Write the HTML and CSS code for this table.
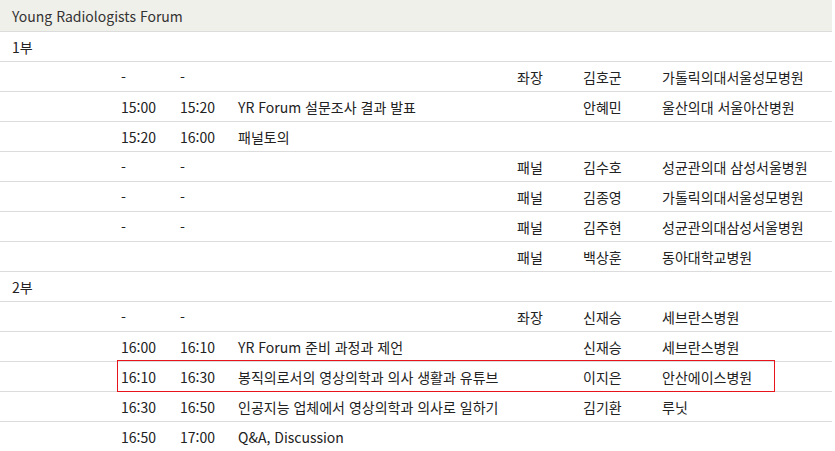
FILE: index.html
```html
<!DOCTYPE html>
<html lang="ko">
<head>
    <meta charset="UTF-8">
    <meta name="viewport" content="width=device-width, initial-scale=1.0">
    <title>Young Radiologists Forum</title>
    <link rel="stylesheet" href="styles.css">
</head>
<body>
    <div class="program">
        <table class="schedule">
            <colgroup>
                <col class="c-blank">
                <col class="c-start">
                <col class="c-end">
                <col class="c-title">
                <col class="c-role">
                <col class="c-name">
                <col class="c-org">
            </colgroup>
            <thead>
                <tr><th colspan="7">Young Radiologists Forum</th></tr>
            </thead>
            <tbody>
                <tr class="part"><td colspan="7">1부</td></tr>
                <tr><td></td><td>-</td><td>-</td><td></td><td>좌장</td><td>김호군</td><td>가톨릭의대서울성모병원</td></tr>
                <tr><td></td><td>15:00</td><td>15:20</td><td>YR Forum 설문조사 결과 발표</td><td></td><td>안혜민</td><td>울산의대 서울아산병원</td></tr>
                <tr><td></td><td>15:20</td><td>16:00</td><td>패널토의</td><td></td><td></td><td></td></tr>
                <tr><td></td><td>-</td><td>-</td><td></td><td>패널</td><td>김수호</td><td>성균관의대 삼성서울병원</td></tr>
                <tr><td></td><td>-</td><td>-</td><td></td><td>패널</td><td>김종영</td><td>가톨릭의대서울성모병원</td></tr>
                <tr><td></td><td>-</td><td>-</td><td></td><td>패널</td><td>김주현</td><td>성균관의대삼성서울병원</td></tr>
                <tr><td></td><td></td><td></td><td></td><td>패널</td><td>백상훈</td><td>동아대학교병원</td></tr>
                <tr class="part"><td colspan="7">2부</td></tr>
                <tr><td></td><td>-</td><td>-</td><td></td><td>좌장</td><td>신재승</td><td>세브란스병원</td></tr>
                <tr><td></td><td>16:00</td><td>16:10</td><td>YR Forum 준비 과정과 제언</td><td></td><td>신재승</td><td>세브란스병원</td></tr>
                <tr><td></td><td>16:10</td><td>16:30</td><td>봉직의로서의 영상의학과 의사 생활과 유튜브</td><td></td><td>이지은</td><td>안산에이스병원</td></tr>
                <tr><td></td><td>16:30</td><td>16:50</td><td>인공지능 업체에서 영상의학과 의사로 일하기</td><td></td><td>김기환</td><td>루닛</td></tr>
                <tr class="last"><td></td><td>16:50</td><td>17:00</td><td>Q&amp;A, Discussion</td><td></td><td></td><td></td></tr>
            </tbody>
        </table>
        <div class="mark"></div>
    </div>
</body>
</html>
```

FILE: styles.css
```css
body {
    margin: 0;
    background: #fff;
    font-family: "Noto Sans CJK KR", "Noto Sans", sans-serif;
    font-size: 14px;
    color: #222;
}
.program {
    position: relative;
    width: 832px;
}
.schedule {
    width: 832px;
    border-collapse: collapse;
    table-layout: fixed;
}
.c-blank { width: 117px; }
.c-start { width: 59px; }
.c-end { width: 58px; }
.c-title { width: 279px; }
.c-role { width: 66px; }
.c-name { width: 79px; }
.c-org { width: 174px; }

.schedule th {
    height: 31px;
    padding: 0 12px;
    background: #f0f0ea;
    border-bottom: 1px solid #dcdcdc;
    text-align: left;
    font-weight: normal;
    color: #333;
}
.schedule td {
    height: 29px;
    padding: 0 0 0 4px;
    border-bottom: 1px solid #dcdcdc;
    white-space: nowrap;
}
.schedule .part td {
    padding-left: 12px;
}
.schedule .last td {
    border-bottom: none;
}
.mark {
    position: absolute;
    left: 117px;
    top: 360px;
    width: 656px;
    height: 30px;
    border: 1px solid #e8141b;
}
```
